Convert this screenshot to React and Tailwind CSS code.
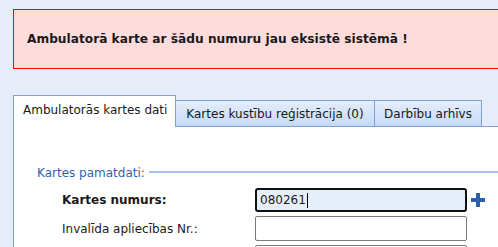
export default function App() {
  return (
    <div
      className="w-[498px] h-[247px] overflow-hidden bg-[#e6ecfa] pl-[13px] pt-[9px]"
      style={{ fontFamily: '"DejaVu Sans", Verdana, sans-serif' }}
    >
      <div className="w-[600px] h-[60px] border border-[#ff0000] bg-[#ffdcdc] flex items-center pl-[13px] pt-[1px] text-[12.2px] font-bold text-[#1a1a1a]">
        Ambulatorā karte ar šādu numuru jau eksistē sistēmā !
      </div>
      <div className="mt-[26px] flex items-end h-[32px] relative z-10">
        <div className="w-[163px] h-[32px] bg-white border border-b-0 border-[#7fa0d0] pl-[9px] pt-[5px] text-[12px] text-[#1a1a1a]">
          Ambulatorās kartes dati
        </div>
        <div className="w-[199px] h-[27px] bg-gradient-to-b from-[#e3edfc] to-[#c6dbf7] border border-l-0 border-[#7fa0d0] flex items-center justify-center text-[12px] text-[#1a1a1a]">
          Kartes kustību reģistrācija (0)
        </div>
        <div className="w-[107px] h-[27px] bg-gradient-to-b from-[#e3edfc] to-[#c6dbf7] border border-l-0 border-[#7fa0d0] flex items-center justify-center text-[12px] text-[#1a1a1a]">
          Darbību arhīvs
        </div>
      </div>
      <div className="bg-white border-l border-t border-[#7fa0d0] -mt-px h-[130px] pt-[37px]">
        <div className="flex items-center pl-[23px]">
          <span className="text-[12px] text-[#2f64b0] pr-[4px]">Kartes pamatdati:</span>
          <div className="flex-1 h-[2px] bg-[#a9c4e8] -mt-[3px]" />
        </div>
        <div className="flex items-center mt-[6px] h-[24px]">
          <span className="w-[241px] pl-[48px] text-[12px] font-bold text-[#1a1a1a]">Kartes numurs:</span>
          <div className="w-[212px] h-[24px] border-2 border-[#111] rounded-[3px] bg-[#e6eefa] flex items-center pl-[3px] text-[12px] text-[#1a1a1a]">
            080261<span className="inline-block w-px h-[15px] bg-black ml-px" />
          </div>
          <svg width="14" height="14" viewBox="0 0 14 14" className="ml-[4px]">
            <rect x="5" y="0" width="4" height="14" fill="#2d5ea8" />
            <rect x="0" y="5" width="14" height="4" fill="#2d5ea8" />
          </svg>
        </div>
        <div className="flex items-center mt-[4px] h-[25px]">
          <span className="w-[241px] pl-[48px] text-[12px] text-[#1a1a1a]">Invalīda apliecības Nr.:</span>
          <div className="w-[212px] h-[25px] border border-[#7a7a7a] rounded-[2px] bg-white" />
        </div>
        <div className="flex mt-[4px]">
          <div className="ml-[241px] w-[212px] h-[25px] border border-[#7a7a7a] rounded-[2px] bg-white" />
        </div>
      </div>
    </div>
  );
}
